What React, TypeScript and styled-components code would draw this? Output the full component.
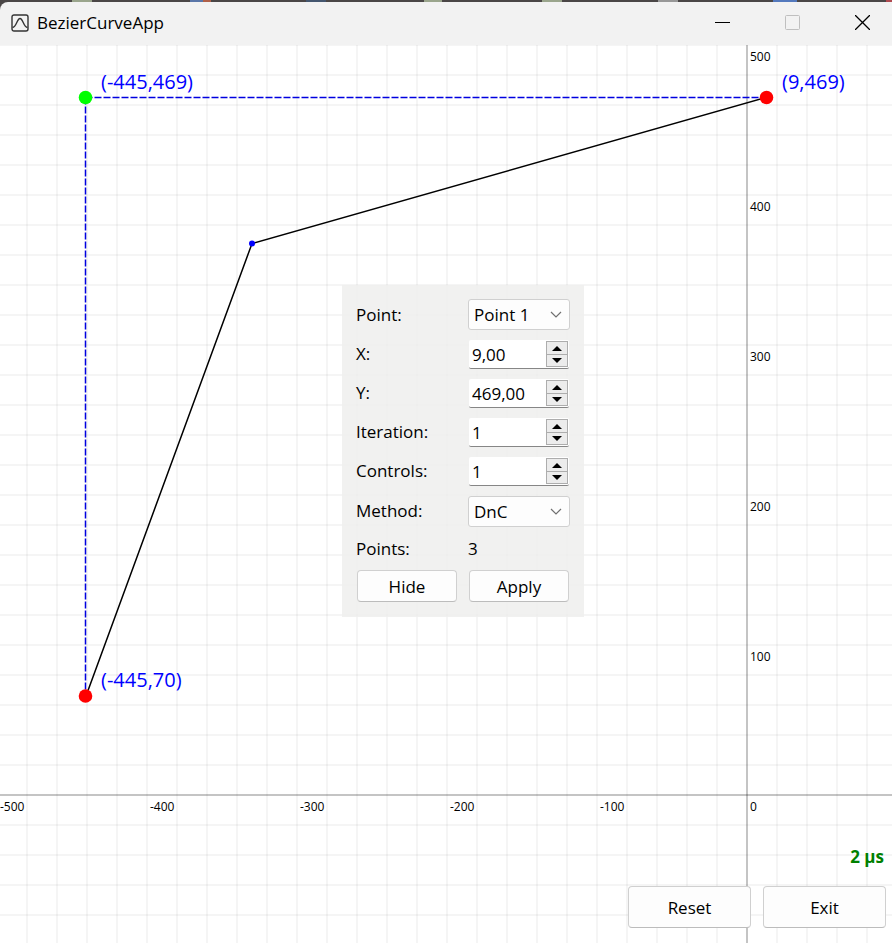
import React from "react";
import styled, { createGlobalStyle } from "styled-components";

const GlobalStyle = createGlobalStyle`
  * { box-sizing: border-box; }
  html, body, #root { height: 100%; margin: 0; }
  body { font-family: "Open Sans", "Noto Sans", sans-serif; font-size: 17px; color: #000; }
  button, input, select { font: inherit; color: inherit; margin: 0; }
`;

const Desktop = styled.div`
  display: flex;
  flex-direction: column;
  min-height: 100%;
  padding-top: 2px;
  background:
    linear-gradient(90deg, #4a4646 72px, #9aa58c 72px 92px, #4a4646 92px 190px, #5a76a8 190px 203px, #b06048 203px 211px, #4a4646 211px 306px, #44566f 306px 326px, #4a4646 326px 424px, #9aa58c 424px 442px, #4a4646 442px 542px, #9aa58c 542px 562px, #4a4646 562px 658px, #989898 658px 678px, #4a4646 678px 773px, #5479bd 773px 797px, #4a4646 797px 886px, #b04a50 886px);
`;

const TitleBar = styled.header`
  display: flex;
  align-items: center;
  height: 43px;
  padding: 0 0 2px 11px;
  background: #f2f2f2;
  border-radius: 8px 0 0 0;
`;

const Title = styled.h1`
  flex: 1;
  margin: 0 0 0 8px;
  font-size: 17px;
  font-weight: 400;
  line-height: 24px;
`;

const CaptionButtons = styled.div`
  display: flex;
  gap: 10px;
`;

const CaptionButton = styled.button`
  display: grid;
  place-items: center;
  width: 60px;
  height: 40px;
  padding: 0;
  border: 0;
  background: transparent;
`;

const Workspace = styled.main`
  position: relative;
  flex: 1;
  display: flex;
  flex-direction: column;
  justify-content: flex-end;
  background: #fff;
`;

const Plot = styled.svg`
  position: absolute;
  inset: 0;
  width: 100%;
  height: 100%;
`;

const TickText = styled.text`
  font-size: 12px;
  fill: #000;
`;

const PointText = styled.text`
  font-size: 20px;
  fill: #0000ff;
`;

const Panel = styled.form`
  position: absolute;
  left: 342px;
  top: 240px;
  display: grid;
  grid-template-columns: 102px 102px;
  grid-template-rows: repeat(5, 31px) 33px 27px 32px;
  gap: 8px 10px;
  align-items: center;
  padding: 14px 14px 15px;
  background: rgba(239, 239, 237, 0.85);
`;

const Label = styled.label`
  line-height: 24px;
`;

const SelectBox = styled.div`
  display: grid;
  align-items: center;
  align-self: end;
  > * { grid-area: 1 / 1; }
  > svg { justify-self: end; margin-right: 8px; pointer-events: none; }
`;

const Select = styled.select`
  appearance: none;
  width: 100%;
  height: 31px;
  padding: 0 20px 0 5px;
  border: 1px solid #d0d0d0;
  border-radius: 3px;
  background: #fdfdfd;
`;

const Spin = styled.div`
  display: flex;
  align-self: end;
  justify-self: center;
  width: 100px;
  height: 29px;
  background: #fff;
  border-bottom: 1px solid #868686;
  border-radius: 2px;
`;

const SpinInput = styled.input`
  flex: 1;
  min-width: 0;
  padding: 0 0 0 3px;
  border: 0;
  background: transparent;
`;

const SpinButtons = styled.div`
  display: grid;
  grid-template-rows: 1fr 1fr;
  width: 22px;
  height: 26px;
  margin: 1px 1px 0 0;
  border: 1px solid #adadad;
`;

const SpinButton = styled.button`
  display: grid;
  place-items: center;
  padding: 0;
  border: 0;
  background: #ececec;
  & + & { border-top: 1px solid #adadad; }
`;

const Button = styled.button<{ $large?: boolean }>`
  justify-self: center;
  width: ${(p) => (p.$large ? "123px" : "100px")};
  height: ${(p) => (p.$large ? "42px" : "32px")};
  padding: 0;
  border: 1px solid #d0d0d0;
  border-bottom-color: #bcbcbc;
  border-radius: 4px;
  background: #fdfdfd;
`;

const Footer = styled.footer`
  position: relative;
  display: flex;
  flex-wrap: wrap;
  justify-content: flex-end;
  gap: 17px 12px;
  padding: 0 6px 15px;
`;

const Timing = styled.output`
  flex-basis: 100%;
  padding-right: 2px;
  text-align: right;
  font-weight: 700;
  line-height: 24px;
  color: #008000;
`;

const originX = 747;
const originY = 750;

function Graph() {
  return (
    <Plot role="img" aria-label="Bezier curve">
      <defs>
        <pattern id="grid" x="12" y="15" width="30" height="30" patternUnits="userSpaceOnUse">
          <g stroke="#000" strokeOpacity="0.04" strokeWidth="2">
            <path d="M15 0V30" />
            <path d="M0 15H30" />
          </g>
        </pattern>
      </defs>
      <rect width="100%" height="100%" fill="url(#grid)" />
      <g stroke="#000" strokeOpacity="0.2" strokeWidth="2">
        <line x1={originX} x2={originX} y1="0" y2="100%" />
        <line x1="0" x2="100%" y1={originY} y2={originY} />
      </g>
      {[100, 200, 300, 400, 500].map((v) => (
        <TickText key={v} x={750} y={766 - v * 1.5}>{v}</TickText>
      ))}
      {[-500, -400, -300, -200, -100, 0].map((v) => (
        <TickText key={v} x={750 + v * 1.5} y={766}>{v}</TickText>
      ))}
      <g stroke="#0000e0" strokeWidth="1.5" strokeDasharray="7 2">
        <line x1="85.5" y1="52.5" x2="766" y2="52.5" />
        <line x1="85.5" y1="52.5" x2="85.5" y2="651" />
      </g>
      <polyline points="766,52.5 252,198.5 86,651" fill="none" stroke="#000" strokeWidth="1.5" />
      <circle cx="252" cy="198.5" r="3" fill="#0000ff" />
      <circle cx="85.5" cy="52.5" r="6.8" fill="#00ff00" />
      <circle cx="766.5" cy="52.5" r="6.8" fill="#ff0000" />
      <circle cx="85.5" cy="651" r="6.8" fill="#ff0000" />
      <PointText x={101} y={44}>(-445,469)</PointText>
      <PointText x={782} y={44}>(9,469)</PointText>
      <PointText x={101} y={642}>(-445,70)</PointText>
    </Plot>
  );
}

function Dropdown({ id, options }: { id: string; options: string[] }) {
  return (
    <SelectBox>
      <Select id={id}>{options.map((o) => <option key={o}>{o}</option>)}</Select>
      <svg width="12" height="8" viewBox="0 0 12 8"><path d="M1 1L6 6L11 1" fill="none" stroke="#707070" strokeWidth="1.2" /></svg>
    </SelectBox>
  );
}

function SpinBox({ id, value }: { id: string; value: string }) {
  return (
    <Spin>
      <SpinInput id={id} defaultValue={value} />
      <SpinButtons>
        <SpinButton type="button" aria-label="Increase">
          <svg width="10" height="5"><path d="M0 5L5 0L10 5Z" /></svg>
        </SpinButton>
        <SpinButton type="button" aria-label="Decrease">
          <svg width="10" height="5"><path d="M0 0L5 5L10 0Z" /></svg>
        </SpinButton>
      </SpinButtons>
    </Spin>
  );
}

export default function App() {
  return (
    <>
      <GlobalStyle />
      <Desktop>
        <TitleBar>
          <svg width="18" height="18" viewBox="0 0 18 18" fill="none" stroke="#333" strokeWidth="1.4">
            <rect x="1" y="1" width="16" height="16" rx="2" />
            <path d="M1.500 13.500C5.500 13 6 4.500 9 4.500S12.500 13 16.500 13.500" />
          </svg>
          <Title>BezierCurveApp</Title>
          <CaptionButtons>
            <CaptionButton aria-label="Minimize">
              <svg width="15" height="15"><path d="M0 7.5H15" stroke="#000" /></svg>
            </CaptionButton>
            <CaptionButton aria-label="Maximize" disabled>
              <svg width="15" height="15"><rect x="0.5" y="0.5" width="14" height="14" rx="1" fill="none" stroke="#bfbfbf" /></svg>
            </CaptionButton>
            <CaptionButton aria-label="Close">
              <svg width="15" height="15"><path d="M0 0L15 15M15 0L0 15" stroke="#000" strokeWidth="1.3" /></svg>
            </CaptionButton>
          </CaptionButtons>
        </TitleBar>
        <Workspace>
          <Graph />
          <Panel onSubmit={(e) => e.preventDefault()}>
            <Label htmlFor="point">Point:</Label>
            <Dropdown id="point" options={["Point 1", "Point 2", "Point 3"]} />
            <Label htmlFor="x">X:</Label>
            <SpinBox id="x" value="9,00" />
            <Label htmlFor="y">Y:</Label>
            <SpinBox id="y" value="469,00" />
            <Label htmlFor="iteration">Iteration:</Label>
            <SpinBox id="iteration" value="1" />
            <Label htmlFor="controls">Controls:</Label>
            <SpinBox id="controls" value="1" />
            <Label htmlFor="method">Method:</Label>
            <Dropdown id="method" options={["DnC", "Brute Force"]} />
            <Label htmlFor="points">Points:</Label>
            <output id="points">3</output>
            <Button type="button">Hide</Button>
            <Button type="submit">Apply</Button>
          </Panel>
          <Footer>
            <Timing>2 µs</Timing>
            <Button $large type="button">Reset</Button>
            <Button $large type="button">Exit</Button>
          </Footer>
        </Workspace>
      </Desktop>
    </>
  );
}
